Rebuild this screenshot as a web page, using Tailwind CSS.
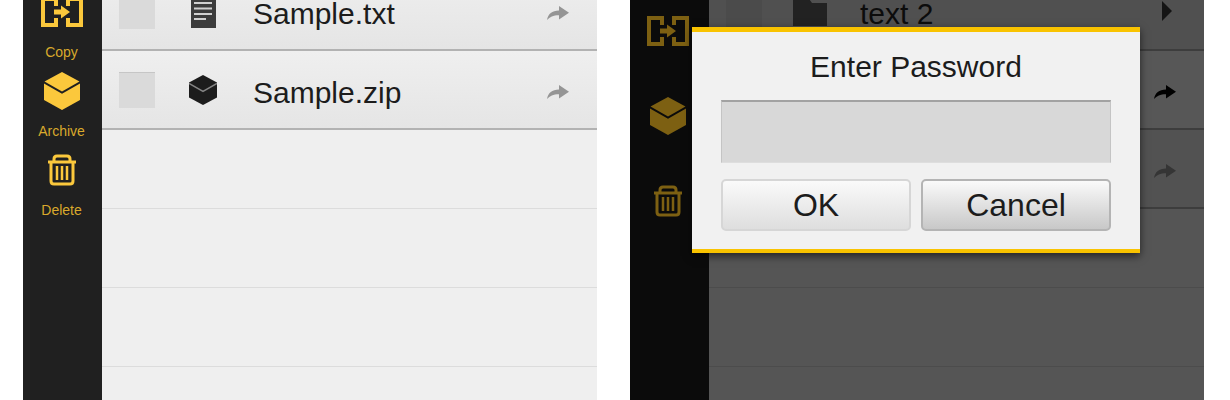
<!DOCTYPE html>
<html lang="en">
<head>
    <meta charset="UTF-8">
    <meta name="viewport" content="width=device-width, initial-scale=1.0">
    <title>File Manager</title>
    <script src="https://cdn.jsdelivr.net/npm/@tailwindcss/browser@4"></script>
</head>
<body class="bg-white text-[#1c1c1c] font-['Liberation_Sans',Arial,sans-serif]">

    <!-- Shared icons -->
    <svg class="hidden">
        <symbol id="icon-copy" viewBox="0 0 42 30">
            <path fill="none" stroke="currentColor" stroke-width="4" d="M15 9V2H2v26h13v-7M27 9V2h13v26H27v-7"/>
            <path fill="currentColor" d="M13 12.500h7V8.500l9 6.500-9 6.500v-4h-7z"/>
        </symbol>
        <symbol id="icon-box" viewBox="0 0 36 38">
            <path fill="currentColor" d="M18 0 35.500 9.500 18 19.500 .5 9.500zM0 11.500 18 21.800 36 11.500V28L18 38 0 28z"/>
        </symbol>
        <symbol id="icon-zip" viewBox="0 0 28 30">
            <path fill="#1c1c1c" d="M14 0 28 7.500v15L14 30 0 22.500v-15z"/>
            <path fill="none" stroke="#858585" stroke-width="1.500" d="M0 8.500 14 16.500 28 8.500"/>
        </symbol>
        <symbol id="icon-trash" viewBox="0 0 28 32">
            <path fill="none" stroke="currentColor" stroke-width="3" stroke-linejoin="round" d="M0 8h28M6 8V5q0-3 3-3h10q3 0 3 3v3M3 8v19q0 3 3 3h16q3 0 3-3V8"/>
            <path fill="none" stroke="currentColor" stroke-width="2.500" d="M9 12v14M14 12v14M19 12v14"/>
        </symbol>
        <symbol id="icon-share" viewBox="0 0 22 14">
            <path fill="currentColor" d="M0 14C1 8 5 4.500 12 4.500V0l10 6.700-10 6.700V9.300C6 9.300 3 11 0 14z"/>
        </symbol>
        <symbol id="icon-doc" viewBox="0 0 25 34">
            <path fill="#3c3c3c" d="M0 0h25v34H0z"/>
            <path stroke="#d0d0d0" stroke-width="2" d="M3 4h18M3 9h18M3 14.500h18M3 20h18M3 25h12"/>
        </symbol>
        <symbol id="icon-folder" viewBox="0 0 34 30">
            <path fill="currentColor" d="M0 0h14l5 7h15v23H0z"/>
        </symbol>
    </svg>

    <main class="flex gap-[33px] h-screen overflow-hidden pl-[23px] pr-[26px]">

        <!-- File list -->
        <section class="flex flex-1 overflow-hidden bg-[#efefef]">
            <nav class="w-[79px] shrink-0 bg-[#202020] pr-0.5 text-[#fbc83c]">
                <div class="-mt-2">
                    <button class="flex flex-col items-center w-full h-[79px]">
                        <span class="flex items-center h-10"><svg class="w-[42px] h-[30px]"><use href="#icon-copy"/></svg></span>
                        <span class="mt-2.5 text-[14px] leading-5 text-[#d9a92c]">Copy</span>
                    </button>
                    <button class="flex flex-col items-center w-full h-[79px]">
                        <span class="flex items-center h-10"><svg class="w-9 h-[38px]"><use href="#icon-box"/></svg></span>
                        <span class="mt-2.5 text-[14px] leading-5 text-[#d9a92c]">Archive</span>
                    </button>
                    <button class="flex flex-col items-center w-full h-[79px]">
                        <span class="flex items-center h-10"><svg class="w-7 h-8"><use href="#icon-trash"/></svg></span>
                        <span class="mt-2.5 text-[14px] leading-5 text-[#d9a92c]">Delete</span>
                    </button>
                </div>
            </nav>

            <ul class="flex-1 -mt-7">
                <li class="flex items-center gap-6 h-[79px] pl-[17px] pr-7 border-b-2 border-[#b2b2b2] bg-linear-to-b from-[#efefef] to-[#e5e5e5]">
                    <input type="checkbox" id="file-txt" class="appearance-none size-9 bg-[#dadada] border-t border-[#c6c6c6]">
                    <span class="flex justify-center w-12"><svg class="w-[25px] h-[34px]"><use href="#icon-doc"/></svg></span>
                    <label for="file-txt" class="flex-1 pl-0.5 pt-1.5 text-[30px] leading-6">Sample.txt</label>
                    <button class="pt-1 text-[#959595]" aria-label="Share Sample.txt"><svg class="w-[22px] h-3.5"><use href="#icon-share"/></svg></button>
                </li>
                <li class="flex items-center gap-6 h-[79px] pl-[17px] pr-7 border-b-2 border-[#b2b2b2] bg-linear-to-b from-[#efefef] to-[#e5e5e5]">
                    <input type="checkbox" id="file-zip" class="appearance-none size-9 bg-[#dadada] border-t border-[#c6c6c6]">
                    <span class="flex justify-center w-12"><svg class="w-7 h-[30px]"><use href="#icon-zip"/></svg></span>
                    <label for="file-zip" class="flex-1 pl-0.5 pt-1.5 text-[30px] leading-6">Sample.zip</label>
                    <button class="pt-1 text-[#959595]" aria-label="Share Sample.zip"><svg class="w-[22px] h-3.5"><use href="#icon-share"/></svg></button>
                </li>
                <li class="h-[79px] border-b border-[#dcdcdc]"></li>
                <li class="h-[79px] border-b border-[#dcdcdc]"></li>
                <li class="h-[79px] border-b border-[#dcdcdc]"></li>
            </ul>
        </section>

        <!-- Password prompt over a dimmed list -->
        <section class="relative flex flex-1 overflow-hidden bg-[#555555]">
            <nav class="w-[79px] shrink-0 bg-[#0b0b0b] pr-1 text-[#7d6012]">
                <div class="-mt-3">
                    <button class="flex items-center justify-center w-full h-[85px]" aria-label="Copy"><svg class="w-[42px] h-[30px]"><use href="#icon-copy"/></svg></button>
                    <button class="flex items-center justify-center w-full h-[85px]" aria-label="Archive"><svg class="w-9 h-[38px]"><use href="#icon-box"/></svg></button>
                    <button class="flex items-center justify-center w-full h-[85px]" aria-label="Delete"><svg class="w-7 h-8"><use href="#icon-trash"/></svg></button>
                </div>
            </nav>

            <ul class="flex-1 -mt-7">
                <li class="flex items-center gap-6 h-[79px] pl-[17px] pr-8 border-b-2 border-[#3d3d3d] bg-[#505050]">
                    <input type="checkbox" id="folder-text" class="appearance-none size-9 bg-[#4b4b4b]">
                    <span class="flex justify-center w-12 text-[#222222]"><svg class="w-[34px] h-[30px]"><use href="#icon-folder"/></svg></span>
                    <label for="folder-text" class="flex-1 pl-0.5 pt-1.5 text-[30px] leading-6 text-[#0c0c0c]">text 2</label>
                    <svg class="w-2.5 h-5 text-[#141414]" viewBox="0 0 10 20"><path fill="currentColor" d="M0 0l10 10L0 20z"/></svg>
                </li>
                <li class="flex items-center justify-end h-[79px] pr-7 border-b-2 border-[#3d3d3d] bg-[#575757]">
                    <button class="pt-1 text-black" aria-label="Share"><svg class="w-[22px] h-3.5"><use href="#icon-share"/></svg></button>
                </li>
                <li class="flex items-center justify-end h-[79px] pr-7 border-b-2 border-[#3d3d3d] bg-[#525252]">
                    <button class="pt-1 text-[#353535]" aria-label="Share"><svg class="w-[22px] h-3.5"><use href="#icon-share"/></svg></button>
                </li>
                <li class="h-[79px] border-b border-[#4c4c4c]"></li>
                <li class="h-[79px] border-b border-[#4c4c4c]"></li>
            </ul>

            <div class="absolute inset-0 pt-[27px] pl-[62px] pr-16">
                <form class="px-[29px] pt-[15px] pb-[18px] bg-[#f1f1f1] border-t-5 border-b-4 border-[#f9c300] shadow-[0_3px_8px_rgba(0,0,0,0.6)]">
                    <label for="password" class="block text-center text-[30px] leading-10">Enter Password</label>
                    <input type="password" id="password" class="block w-full h-[63px] mt-[13px] px-3 text-[30px] bg-[#d8d8d8] border border-[#c4c4c4] border-t-2 border-t-[#a2a2a2] border-b-[#dedede]">
                    <div class="flex gap-2.5 mt-4">
                        <button type="button" class="flex-1 h-[52px] rounded-[5px] border-2 border-[#d6d6d6] bg-linear-to-b from-[#fafafa] to-[#dedede] text-[32px] leading-8">OK</button>
                        <button type="button" class="flex-1 h-[52px] rounded-[5px] border-2 border-[#b4b4b4] bg-linear-to-b from-[#fafafa] to-[#c8c8c8] text-[32px] leading-8">Cancel</button>
                    </div>
                </form>
            </div>
        </section>

    </main>

</body>
</html>
